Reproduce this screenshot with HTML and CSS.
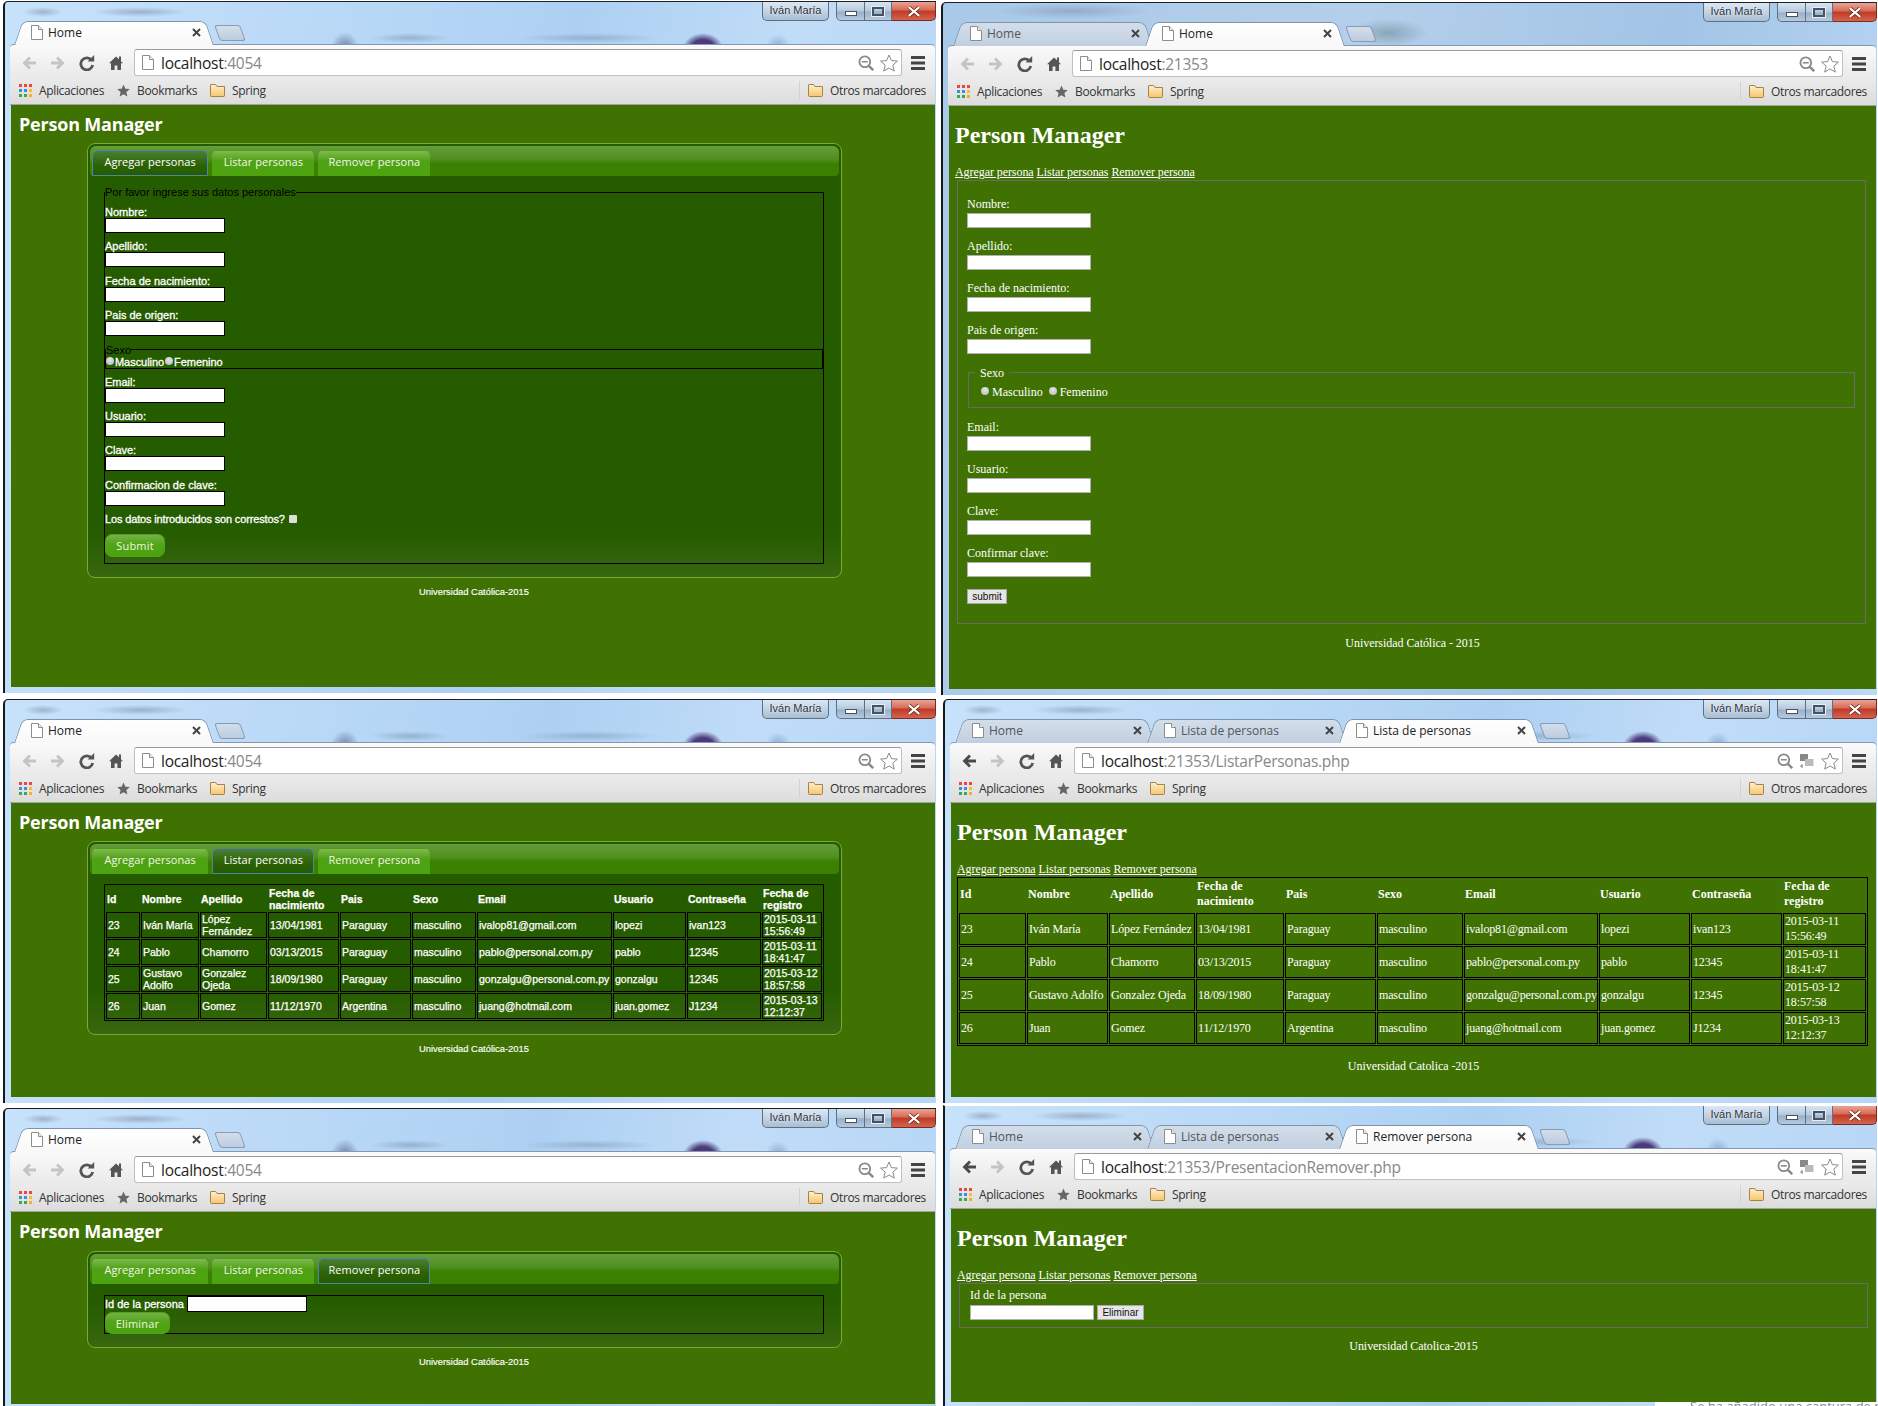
FILE: index.html
```html
<!DOCTYPE html>
<html lang="es">
<head>
<meta charset="utf-8">
<title>Person Manager</title>
<link rel="stylesheet" href="styles.css">
</head>
<body>
<svg class="defs" width="0" height="0" aria-hidden="true">
  <defs>
    <linearGradient id="fg" x1="0" y1="0" x2="0" y2="1"><stop offset="0" stop-color="#fff0cc"/><stop offset="1" stop-color="#f7c56e"/></linearGradient>
    <symbol id="back" viewBox="0 0 16 16"><path d="M15 8H4M9 2.5 3.5 8 9 13.5" fill="none" stroke="currentColor" stroke-width="2.8"/></symbol>
    <symbol id="fwd" viewBox="0 0 16 16"><path d="M1 8h11M7 2.5 12.5 8 7 13.5" fill="none" stroke="currentColor" stroke-width="2.8"/></symbol>
    <symbol id="reload" viewBox="0 0 16 16"><path d="M12.6 5.2A6 6 0 1 0 13.7 10" fill="none" stroke="#555" stroke-width="2.8"/><path d="M8.6 6.6h6.6V0z" fill="#555"/></symbol>
    <symbol id="home" viewBox="0 0 16 16"><path d="M8 1.5 1 8.2h2V15h3.6v-4.6h2.8V15H13V8.2h2l-2-2V1.5h-2v2.8z" fill="#555"/></symbol>
    <symbol id="page" viewBox="0 0 12 15"><path d="M.5.5h7l4 4v10H.5z" fill="#fff" stroke="#8d8d8d"/><path d="M7.5.5v4h4" fill="#eee" stroke="#8d8d8d"/></symbol>
    <symbol id="x" viewBox="0 0 9 9"><path d="M1 1l7 7M8 1 1 8" stroke="#444" stroke-width="2"/></symbol>
    <symbol id="zoom" viewBox="0 0 16 16"><circle cx="6.8" cy="6.8" r="5.4" fill="none" stroke="#888" stroke-width="1.8"/><path d="M3.8 6.8h6" stroke="#888" stroke-width="1.6"/><path d="M10.8 10.8l4.4 4.4" stroke="#888" stroke-width="2.4"/></symbol>
    <symbol id="staro" viewBox="0 0 18 18"><path d="M9 1l2.4 5.6 6 .5-4.6 4 1.5 6L9 14l-5.3 3.1 1.5-6-4.6-4 6-.5z" fill="#fff" stroke="#8a8a8a"/></symbol>
    <symbol id="star" viewBox="0 0 13 13"><path d="M6.5.5l1.8 4.2 4.5.4-3.4 3 1 4.4-3.9-2.3-3.9 2.3 1-4.4-3.4-3 4.5-.4z" fill="#666"/></symbol>
    <symbol id="menu" viewBox="0 0 14 14"><path d="M0 0h14v3H0zM0 5.5h14v3H0zM0 11h14v3H0z" fill="#444"/></symbol>
    <symbol id="apps" viewBox="0 0 13 13"><path d="M0 0h3v3H0z" fill="#e44"/><path d="M5 0h3v3H5z" fill="#e44"/><path d="M10 0h3v3h-3z" fill="#e44"/><path d="M0 5h3v3H0z" fill="#39c"/><path d="M5 5h3v3H5z" fill="#48e"/><path d="M10 5h3v3h-3z" fill="#fb2"/><path d="M0 10h3v3H0z" fill="#3a5"/><path d="M5 10h3v3H5z" fill="#3a5"/><path d="M10 10h3v3h-3z" fill="#fa2"/></symbol>
    <symbol id="folder" viewBox="0 0 15 14"><path d="M.5 2v10.5a1 1 0 0 0 1 1h12a1 1 0 0 0 1-1V3.5H7L5.7 1.5H1a.5.5 0 0 0-.5.5z" fill="url(#fg)" stroke="#a5824a"/></symbol>
    <symbol id="tr" viewBox="0 0 15 15"><path d="M1 1h8v7H1z" fill="#888"/><path d="M6 6h8.5v7H6z" fill="#bbb"/><path d="M1 13h3M3 11v4" stroke="#888"/></symbol>
    <symbol id="cx" viewBox="0 0 16 12"><path d="M2 1l12 10M14 1 2 11" stroke="#5a1a10" stroke-width="4"/><path d="M2 1l12 10M14 1 2 11" stroke="#fff" stroke-width="2.4"/></symbol>
  </defs>
</svg>

<!-- Ventana 1 -->
<section class="win w1">
  <div class="title">
    <div class="tab on"><svg class="fav"><use href="#page"/></svg><span class="tname">Home</span><svg class="tx"><use href="#x"/></svg></div>
    <div class="newtab"></div>
    <div class="ctls"><span class="who">Iván María</span><span class="btn min"><i></i></span><span class="btn max"><i></i></span><span class="btn cls"><svg class="cxi"><use href="#cx"/></svg></span></div>
  </div>
  <div class="nav">
    <svg class="ni off"><use href="#back"/></svg><svg class="ni off"><use href="#fwd"/></svg><svg class="ni"><use href="#reload"/></svg><svg class="ni"><use href="#home"/></svg>
    <div class="omni"><svg class="oi"><use href="#page"/></svg><span class="url">localhost<span class="dim">:4054</span></span><svg class="ri"><use href="#zoom"/></svg><svg class="rs"><use href="#staro"/></svg></div>
    <svg class="mn"><use href="#menu"/></svg>
  </div>
  <div class="bm">
    <span class="bk"><svg class="bi"><use href="#apps"/></svg>Aplicaciones</span><span class="bk"><svg class="bi"><use href="#star"/></svg>Bookmarks</span><span class="bk"><svg class="bf"><use href="#folder"/></svg>Spring</span>
    <span class="bk other"><svg class="bf"><use href="#folder"/></svg>Otros marcadores</span>
  </div>
  <main class="page">
    <h1 class="pm">Person Manager</h1>
    <div class="panel">
      <div class="bar"><a class="ptab cur">Agregar personas</a><a class="ptab">Listar personas</a><a class="ptab">Remover persona</a></div>
      <form class="mform">
        <fieldset class="mset">
          <legend class="mleg">Por favor ingrese sus datos personales</legend>
          <label class="mf">Nombre:<input class="minp" type="text"></label>
          <label class="mf">Apellido:<input class="minp" type="text"></label>
          <label class="mf">Fecha de nacimiento:<input class="minp" type="text"></label>
          <label class="mf">Pais de origen:<input class="minp" type="text"></label>
          <fieldset class="msex">
            <legend class="mleg">Sexo</legend>
            <div class="mrad"><input class="rad" type="radio" name="a"><span>Masculino</span><input class="rad" type="radio" name="a"><span>Femenino</span></div>
          </fieldset>
          <label class="mf">Email:<input class="minp" type="text"></label>
          <label class="mf">Usuario:<input class="minp" type="text"></label>
          <label class="mf">Clave:<input class="minp" type="text"></label>
          <label class="mf">Confirmacion de clave:<input class="minp" type="text"></label>
          <div class="mchk">Los datos introducidos son correstos? <input class="chk" type="checkbox"></div>
          <button class="gbtn sub" type="button">Submit</button>
        </fieldset>
      </form>
    </div>
    <p class="mfoot">Universidad Católica-2015</p>
  </main>
</section>

<!-- Ventana 2 -->
<section class="win w2">
  <div class="title">
    <div class="tab"><svg class="fav"><use href="#page"/></svg><span class="tname">Home</span><svg class="tx"><use href="#x"/></svg></div>
    <div class="tab on"><svg class="fav"><use href="#page"/></svg><span class="tname">Home</span><svg class="tx"><use href="#x"/></svg></div>
    <div class="newtab"></div>
    <div class="ctls"><span class="who">Iván María</span><span class="btn min"><i></i></span><span class="btn max"><i></i></span><span class="btn cls"><svg class="cxi"><use href="#cx"/></svg></span></div>
  </div>
  <div class="nav">
    <svg class="ni off"><use href="#back"/></svg><svg class="ni off"><use href="#fwd"/></svg><svg class="ni"><use href="#reload"/></svg><svg class="ni"><use href="#home"/></svg>
    <div class="omni"><svg class="oi"><use href="#page"/></svg><span class="url">localhost<span class="dim">:21353</span></span><svg class="ri"><use href="#zoom"/></svg><svg class="rs"><use href="#staro"/></svg></div>
    <svg class="mn"><use href="#menu"/></svg>
  </div>
  <div class="bm">
    <span class="bk"><svg class="bi"><use href="#apps"/></svg>Aplicaciones</span><span class="bk"><svg class="bi"><use href="#star"/></svg>Bookmarks</span><span class="bk"><svg class="bf"><use href="#folder"/></svg>Spring</span>
    <span class="bk other"><svg class="bf"><use href="#folder"/></svg>Otros marcadores</span>
  </div>
  <main class="page plain">
    <h1 class="ph">Person Manager</h1>
    <nav class="pnav"><a href="#">Agregar persona</a> <a href="#">Listar personas</a> <a href="#">Remover persona</a></nav>
    <form class="pset">
      <label class="pf">Nombre:<input class="pinp" type="text"></label>
      <label class="pf">Apellido:<input class="pinp" type="text"></label>
      <label class="pf">Fecha de nacimiento:<input class="pinp" type="text"></label>
      <label class="pf">Pais de origen:<input class="pinp" type="text"></label>
      <fieldset class="psex">
        <legend class="pleg">Sexo</legend>
        <div class="prad"><input class="rad" type="radio" name="b"><span>Masculino</span><input class="rad" type="radio" name="b"><span>Femenino</span></div>
      </fieldset>
      <label class="pf">Email:<input class="pinp" type="text"></label>
      <label class="pf">Usuario:<input class="pinp" type="text"></label>
      <label class="pf">Clave:<input class="pinp" type="text"></label>
      <label class="pf">Confirmar clave:<input class="pinp" type="text"></label>
      <button class="pbtn" type="button">submit</button>
    </form>
    <p class="pfoot">Universidad Católica - 2015</p>
  </main>
</section>

<!-- Ventana 3 -->
<section class="win w3">
  <div class="title">
    <div class="tab on"><svg class="fav"><use href="#page"/></svg><span class="tname">Home</span><svg class="tx"><use href="#x"/></svg></div>
    <div class="newtab"></div>
    <div class="ctls"><span class="who">Iván María</span><span class="btn min"><i></i></span><span class="btn max"><i></i></span><span class="btn cls"><svg class="cxi"><use href="#cx"/></svg></span></div>
  </div>
  <div class="nav">
    <svg class="ni off"><use href="#back"/></svg><svg class="ni off"><use href="#fwd"/></svg><svg class="ni"><use href="#reload"/></svg><svg class="ni"><use href="#home"/></svg>
    <div class="omni"><svg class="oi"><use href="#page"/></svg><span class="url">localhost<span class="dim">:4054</span></span><svg class="ri"><use href="#zoom"/></svg><svg class="rs"><use href="#staro"/></svg></div>
    <svg class="mn"><use href="#menu"/></svg>
  </div>
  <div class="bm">
    <span class="bk"><svg class="bi"><use href="#apps"/></svg>Aplicaciones</span><span class="bk"><svg class="bi"><use href="#star"/></svg>Bookmarks</span><span class="bk"><svg class="bf"><use href="#folder"/></svg>Spring</span>
    <span class="bk other"><svg class="bf"><use href="#folder"/></svg>Otros marcadores</span>
  </div>
  <main class="page">
    <h1 class="pm">Person Manager</h1>
    <div class="panel">
      <div class="bar"><a class="ptab">Agregar personas</a><a class="ptab cur">Listar personas</a><a class="ptab">Remover persona</a></div>
      <table class="mtab">
        <colgroup><col class="m1"><col class="m2"><col class="m3"><col class="m4"><col class="m5"><col class="m6"><col class="m7"><col class="m8"><col class="m9"><col class="m10"></colgroup>
        <thead><tr><th>Id</th><th>Nombre</th><th>Apellido</th><th>Fecha de nacimiento</th><th>Pais</th><th>Sexo</th><th>Email</th><th>Usuario</th><th>Contraseña</th><th>Fecha de registro</th></tr></thead>
        <tbody>
          <tr><td>23</td><td>Iván María</td><td>López Fernández</td><td>13/04/1981</td><td>Paraguay</td><td>masculino</td><td>ivalop81@gmail.com</td><td>lopezi</td><td>ivan123</td><td>2015-03-11 15:56:49</td></tr>
          <tr><td>24</td><td>Pablo</td><td>Chamorro</td><td>03/13/2015</td><td>Paraguay</td><td>masculino</td><td>pablo@personal.com.py</td><td>pablo</td><td>12345</td><td>2015-03-11 18:41:47</td></tr>
          <tr><td>25</td><td>Gustavo Adolfo</td><td>Gonzalez Ojeda</td><td>18/09/1980</td><td>Paraguay</td><td>masculino</td><td>gonzalgu@personal.com.py</td><td>gonzalgu</td><td>12345</td><td>2015-03-12 18:57:58</td></tr>
          <tr><td>26</td><td>Juan</td><td>Gomez</td><td>11/12/1970</td><td>Argentina</td><td>masculino</td><td>juang@hotmail.com</td><td>juan.gomez</td><td>J1234</td><td>2015-03-13 12:12:37</td></tr>
        </tbody>
      </table>
    </div>
    <p class="mfoot">Universidad Católica-2015</p>
  </main>
</section>

<!-- Ventana 4 -->
<section class="win w4">
  <div class="title">
    <div class="tab"><svg class="fav"><use href="#page"/></svg><span class="tname">Home</span><svg class="tx"><use href="#x"/></svg></div>
    <div class="tab"><svg class="fav"><use href="#page"/></svg><span class="tname">Lista de personas</span><svg class="tx"><use href="#x"/></svg></div>
    <div class="tab on"><svg class="fav"><use href="#page"/></svg><span class="tname">Lista de personas</span><svg class="tx"><use href="#x"/></svg></div>
    <div class="newtab"></div>
    <div class="ctls"><span class="who">Iván María</span><span class="btn min"><i></i></span><span class="btn max"><i></i></span><span class="btn cls"><svg class="cxi"><use href="#cx"/></svg></span></div>
  </div>
  <div class="nav">
    <svg class="ni live"><use href="#back"/></svg><svg class="ni off"><use href="#fwd"/></svg><svg class="ni"><use href="#reload"/></svg><svg class="ni"><use href="#home"/></svg>
    <div class="omni"><svg class="oi"><use href="#page"/></svg><span class="url">localhost<span class="dim">:21353/ListarPersonas.php</span></span><svg class="ri"><use href="#zoom"/></svg><svg class="rt"><use href="#tr"/></svg><svg class="rs"><use href="#staro"/></svg></div>
    <svg class="mn"><use href="#menu"/></svg>
  </div>
  <div class="bm">
    <span class="bk"><svg class="bi"><use href="#apps"/></svg>Aplicaciones</span><span class="bk"><svg class="bi"><use href="#star"/></svg>Bookmarks</span><span class="bk"><svg class="bf"><use href="#folder"/></svg>Spring</span>
    <span class="bk other"><svg class="bf"><use href="#folder"/></svg>Otros marcadores</span>
  </div>
  <main class="page plain">
    <h1 class="ph">Person Manager</h1>
    <nav class="pnav"><a href="#">Agregar persona</a> <a href="#">Listar personas</a> <a href="#">Remover persona</a></nav>
    <table class="ptable">
      <colgroup><col class="p1"><col class="p2"><col class="p3"><col class="p4"><col class="p5"><col class="p6"><col class="p7"><col class="p8"><col class="p9"><col class="p10"></colgroup>
      <thead><tr><th>Id</th><th>Nombre</th><th>Apellido</th><th>Fecha de nacimiento</th><th>Pais</th><th>Sexo</th><th>Email</th><th>Usuario</th><th>Contraseña</th><th>Fecha de registro</th></tr></thead>
      <tbody>
        <tr><td>23</td><td>Iván María</td><td>López Fernández</td><td>13/04/1981</td><td>Paraguay</td><td>masculino</td><td>ivalop81@gmail.com</td><td>lopezi</td><td>ivan123</td><td>2015-03-11 15:56:49</td></tr>
        <tr><td>24</td><td>Pablo</td><td>Chamorro</td><td>03/13/2015</td><td>Paraguay</td><td>masculino</td><td>pablo@personal.com.py</td><td>pablo</td><td>12345</td><td>2015-03-11 18:41:47</td></tr>
        <tr><td>25</td><td>Gustavo Adolfo</td><td>Gonzalez Ojeda</td><td>18/09/1980</td><td>Paraguay</td><td>masculino</td><td>gonzalgu@personal.com.py</td><td>gonzalgu</td><td>12345</td><td>2015-03-12 18:57:58</td></tr>
        <tr><td>26</td><td>Juan</td><td>Gomez</td><td>11/12/1970</td><td>Argentina</td><td>masculino</td><td>juang@hotmail.com</td><td>juan.gomez</td><td>J1234</td><td>2015-03-13 12:12:37</td></tr>
      </tbody>
    </table>
    <p class="pfoot tf">Universidad Catolica -2015</p>
  </main>
</section>

<!-- Ventana 5 -->
<section class="win w5">
  <div class="title">
    <div class="tab on"><svg class="fav"><use href="#page"/></svg><span class="tname">Home</span><svg class="tx"><use href="#x"/></svg></div>
    <div class="newtab"></div>
    <div class="ctls"><span class="who">Iván María</span><span class="btn min"><i></i></span><span class="btn max"><i></i></span><span class="btn cls"><svg class="cxi"><use href="#cx"/></svg></span></div>
  </div>
  <div class="nav">
    <svg class="ni off"><use href="#back"/></svg><svg class="ni off"><use href="#fwd"/></svg><svg class="ni"><use href="#reload"/></svg><svg class="ni"><use href="#home"/></svg>
    <div class="omni"><svg class="oi"><use href="#page"/></svg><span class="url">localhost<span class="dim">:4054</span></span><svg class="ri"><use href="#zoom"/></svg><svg class="rs"><use href="#staro"/></svg></div>
    <svg class="mn"><use href="#menu"/></svg>
  </div>
  <div class="bm">
    <span class="bk"><svg class="bi"><use href="#apps"/></svg>Aplicaciones</span><span class="bk"><svg class="bi"><use href="#star"/></svg>Bookmarks</span><span class="bk"><svg class="bf"><use href="#folder"/></svg>Spring</span>
    <span class="bk other"><svg class="bf"><use href="#folder"/></svg>Otros marcadores</span>
  </div>
  <main class="page">
    <h1 class="pm">Person Manager</h1>
    <div class="panel">
      <div class="bar"><a class="ptab">Agregar personas</a><a class="ptab">Listar personas</a><a class="ptab cur">Remover persona</a></div>
      <form class="mdel">
        <label class="mdl">Id de la persona<input class="minp il" type="text"></label>
        <button class="gbtn del" type="button">Eliminar</button>
      </form>
    </div>
    <p class="mfoot">Universidad Católica-2015</p>
  </main>
</section>

<!-- Ventana 6 -->
<section class="win w6">
  <div class="title">
    <div class="tab"><svg class="fav"><use href="#page"/></svg><span class="tname">Home</span><svg class="tx"><use href="#x"/></svg></div>
    <div class="tab"><svg class="fav"><use href="#page"/></svg><span class="tname">Lista de personas</span><svg class="tx"><use href="#x"/></svg></div>
    <div class="tab on"><svg class="fav"><use href="#page"/></svg><span class="tname">Remover persona</span><svg class="tx"><use href="#x"/></svg></div>
    <div class="newtab"></div>
    <div class="ctls"><span class="who">Iván María</span><span class="btn min"><i></i></span><span class="btn max"><i></i></span><span class="btn cls"><svg class="cxi"><use href="#cx"/></svg></span></div>
  </div>
  <div class="nav">
    <svg class="ni live"><use href="#back"/></svg><svg class="ni off"><use href="#fwd"/></svg><svg class="ni"><use href="#reload"/></svg><svg class="ni"><use href="#home"/></svg>
    <div class="omni"><svg class="oi"><use href="#page"/></svg><span class="url">localhost<span class="dim">:21353/PresentacionRemover.php</span></span><svg class="ri"><use href="#zoom"/></svg><svg class="rt"><use href="#tr"/></svg><svg class="rs"><use href="#staro"/></svg></div>
    <svg class="mn"><use href="#menu"/></svg>
  </div>
  <div class="bm">
    <span class="bk"><svg class="bi"><use href="#apps"/></svg>Aplicaciones</span><span class="bk"><svg class="bi"><use href="#star"/></svg>Bookmarks</span><span class="bk"><svg class="bf"><use href="#folder"/></svg>Spring</span>
    <span class="bk other"><svg class="bf"><use href="#folder"/></svg>Otros marcadores</span>
  </div>
  <main class="page plain">
    <h1 class="ph">Person Manager</h1>
    <nav class="pnav"><a href="#">Agregar persona</a> <a href="#">Listar personas</a> <a href="#">Remover persona</a></nav>
    <form class="pset pdel">
      <label class="pdl">Id de la persona</label>
      <div class="pdr"><input class="pinp" type="text"><button class="pbtn el" type="button">Eliminar</button></div>
    </form>
    <p class="pfoot">Universidad Catolica-2015</p>
  </main>
</section>

<div class="toast">Se ha añadido una captura de pantalla</div>
</body>
</html>
```

FILE: styles.css
```css
* { box-sizing: border-box; }
html, body { margin: 0; padding: 0; }
body {
  position: relative;
  width: 1878px;
  height: 1406px;
  overflow: hidden;
  background: #fff;
  font-family: "Open Sans", sans-serif;
}
.defs { position: absolute; }

/* Ventanas sobre el escritorio */
.win {
  position: absolute;
  display: flex;
  flex-direction: column;
  padding: 0 1px 0 5px;
  border-left: 2px solid #14181f;
  border-top: 1px solid #1c2026;
  border-top-left-radius: 5px;
  overflow: hidden;
  background:
    radial-gradient(ellipse 20px 5px at 38px 10px, rgba(70,85,110,.32), transparent),
    radial-gradient(ellipse 48px 5px at 135px 10px, rgba(70,85,110,.32), transparent),
    radial-gradient(ellipse 14px 16px at 340px 46px, rgba(60,70,110,.6), transparent),
    radial-gradient(ellipse 40px 5px at 405px 36px, rgba(70,85,110,.28), transparent),
    radial-gradient(ellipse 70px 5px at 585px 36px, rgba(70,85,110,.25), transparent),
    radial-gradient(ellipse 20px 15px at 698px 46px, #4b3a7c 0, #4b3a7c 55%, transparent 100%),
    radial-gradient(ellipse 12px 12px at 773px 44px, rgba(70,110,170,.4), transparent),
    linear-gradient(100deg, #c7e2fb 0%, #bad9f7 30%, #add0f2 55%, #c0dcf8 75%, #b6d6f6 100%);
}
.w1 { left: 3px; top: 1px; width: 933px; height: 692px; }
.w2 {
  left: 941px; top: 2px; width: 936px; height: 693px;
  background:
    radial-gradient(ellipse 80px 8px at 130px 8px, rgba(70,85,110,.25), transparent),
    radial-gradient(ellipse 40px 14px at 445px 30px, rgba(60,90,90,.35), transparent),
    linear-gradient(100deg, #a9c9e8 0%, #b4cfeb 40%, #a3c4e6 70%, #bcd9f6 100%);
}
.w3 { left: 3px; top: 699px; width: 933px; height: 404px; }
.w4 { left: 943px; top: 699px; width: 934px; height: 404px; }
.w5 { left: 3px; top: 1108px; width: 933px; height: 298px; }
.w6 { left: 943px; top: 1105px; width: 934px; height: 301px; }
.w6 { border-top-color: #fff; border-top-left-radius: 0; }

.title {
  position: relative;
  z-index: 2;
  height: 42px;
  flex: none;
  display: flex;
  align-items: flex-end;
  padding-left: 4px;
}
.w2 .title, .w4 .title, .w6 .title { padding-left: 5px; }

/* Pestañas del navegador */
.tab {
  position: relative;
  z-index: 1;
  flex: none;
  display: flex;
  align-items: center;
  width: 200px;
  height: 24px;
  margin-right: -8px;
  margin-bottom: -1px;
  padding: 0 13px 1px 17px;
  font-size: 12px;
  color: #555;
}
.tab::before, .tab::after {
  content: "";
  position: absolute;
  z-index: -1;
  top: 0;
  bottom: 0;
  width: 50%;
  background: linear-gradient(#d3deea, #c0cfe0);
  border: 1px solid #8093a8;
  border-bottom: 0;
}
.tab::before {
  left: 0;
  border-right: 0;
  border-top-left-radius: 6px;
  transform: skewX(-19deg);
  transform-origin: bottom left;
}
.tab::after {
  right: 0;
  border-left: 0;
  border-top-right-radius: 6px;
  transform: skewX(19deg);
  transform-origin: bottom right;
}
.tab.on { z-index: 2; color: #222; }
.tab.on::before, .tab.on::after { background: linear-gradient(#fff, #f8f8f8); }
.fav { width: 12px; height: 15px; flex: none; }
.tname { flex: 1; margin-left: 5px; white-space: nowrap; }
.tx { width: 9px; height: 9px; flex: none; }
.newtab {
  flex: none;
  width: 26px;
  height: 16px;
  margin: 0 0 3px 11px;
  background: linear-gradient(#d3deea, #bccce0);
  border: 1px solid #8a9bb0;
  border-radius: 3px;
  transform: skewX(20deg);
}

/* Controles de ventana */
.ctls {
  position: absolute;
  top: 0;
  right: -1px;
  display: flex;
  height: 19px;
}
.who {
  width: 67px;
  margin-right: 7px;
  border: 1px solid #5f6f80;
  border-top: 0;
  border-radius: 0 0 5px 5px;
  background: linear-gradient(#dbe8f4, #a9bed4);
  font: 11px/17px "Liberation Sans", sans-serif;
  text-align: center;
  color: #2c3138;
  text-shadow: 0 0 2px #fff;
}
.btn {
  display: flex;
  align-items: center;
  justify-content: center;
  height: 19px;
  border: 1px solid #5f6f80;
  border-top: 0;
  border-left-width: 0;
  background: linear-gradient(#d6e5f3 0, #b5c9dd 50%, #98b0c8 55%, #b6cadf 100%);
}
.min { width: 29px; border-left-width: 1px; border-radius: 0 0 0 5px; }
.min i { display: block; width: 12px; height: 5px; margin-top: 5px; background: #fff; border: 1px solid #46525f; }
.max { width: 27px; }
.max i { display: block; width: 12px; height: 9px; border: 2px solid #46525f; outline: 1px solid #e8eef4; background: transparent; }
.cls {
  width: 44px;
  border-radius: 0 0 5px 0;
  border-color: #7a2a20;
  background: linear-gradient(#eba395 0, #d66a55 45%, #bf3a26 50%, #d5634d 100%);
}
.cxi { width: 14px; height: 11px; }

/* Barra de navegación */
.nav {
  position: relative;
  flex: none;
  height: 34px;
  display: flex;
  align-items: center;
  padding: 2px 0 0 4px;
  background: linear-gradient(#fafafa, #e9e9e9);
  border-top: 1px solid #8598ad;
  border-top-left-radius: 4px;
  border-top-right-radius: 4px;
}
.ni { width: 16px; height: 16px; flex: none; margin: 0 6.5px; color: #c2c2c2; }
.ni.off { color: #c4c4c4; }
.ni.live { color: #4a4a4a; }
.omni {
  flex: 1;
  display: flex;
  align-items: center;
  height: 27px;
  margin-left: 4px;
  background: #fff;
  border: 1px solid #c0c0c0;
  border-top-color: #9a9a9a;
  border-radius: 3px;
}
.oi { width: 12px; height: 15px; flex: none; margin: 0 7px; }
.url { flex: 1; font-size: 15.5px; color: #222; white-space: nowrap; letter-spacing: -.28px; }
.dim { color: #888; }
.ri { width: 16px; height: 16px; flex: none; margin-right: 6px; }
.rt { width: 15px; height: 15px; flex: none; margin-right: 7px; }
.rs { width: 18px; height: 18px; flex: none; margin-right: 3px; }
.mn { width: 14px; height: 14px; flex: none; margin: 0 10px 0 9px; }

/* Barra de marcadores */
.bm {
  flex: none;
  height: 27px;
  display: flex;
  align-items: center;
  padding: 0 9px 2px;
  background: linear-gradient(#ebebeb, #dcdcdc);
  border-bottom: 1px solid #a3a3a3;
  font-size: 12px;
  color: #333;
  white-space: nowrap;
}
.bk { display: flex; align-items: center; gap: 7px; margin-right: 13px; letter-spacing: -.35px; }
.bi { width: 13px; height: 13px; flex: none; }
.bf { width: 15px; height: 14px; flex: none; }
.bk.other { margin: 0 0 0 auto; padding-left: 8px; border-left: 1px solid #d2d2d2; height: 18px; }

/* Página */
.page {
  flex: 1;
  min-height: 0;
  margin: 0 0 6px 1px;
  background: #3f7203;
  color: #fff;
}
.w5 .page { margin-bottom: 2px; }
.w6 .page { margin-bottom: 4px; }

/* Versión con plantilla verde */
.pm {
  margin: 0 0 0 8px;
  height: 38px;
  font: 700 18px/38px "Open Sans", sans-serif;
  letter-spacing: -.2px;
  color: #fff;
}
.w5 .pm { height: 39px; }
.panel {
  width: 755px;
  margin-left: 76px;
  padding: 2px 0 13px;
  border: 1px solid #73ad31;
  border-radius: 8px;
  background: linear-gradient(#265c00 calc(100% - 45px), #38670f);
  font-family: "Liberation Sans", Arial, sans-serif;
}
.bar {
  display: flex;
  align-items: flex-end;
  gap: 4px;
  height: 30px;
  margin: 0 2px;
  padding-left: 2px;
  border-radius: 6px 6px 4px 4px;
  background: linear-gradient(#659d3a 0, #4f8e1e 45%, #3b8000 60%, #3b8000 100%);
}
.ptab {
  height: 26px;
  padding: 0 10.5px;
  border: 1px solid transparent;
  border-bottom: 0;
  border-radius: 6px 6px 0 0;
  background: linear-gradient(#80b852 0, #50a215 40%, #4ca40e 100%);
  font: 11px/22px "Open Sans", sans-serif;
  letter-spacing: .05px;
  color: #f2f8ea;
  white-space: nowrap;
}
.ptab:first-child { padding: 0 11.5px; }
.ptab:last-child { padding: 0 9px; }
.ptab.cur {
  border: 1px solid #4b87a9;
  background: linear-gradient(#4b7f33 0, #2c6205 60%, #265c00 100%);
  color: #fff;
}
.mform { margin: 10px 17px 0 16px; }
.mset { margin: 0; padding: 0 0 6px; border: 1px solid #000; }
.mleg { padding: 0; font-size: 11px; line-height: 12px; color: #000; }
.mf {
  display: block;
  margin-bottom: 7.4px;
  font-size: 11px;
  line-height: 12px;
  color: #fff;
  -webkit-text-stroke: .3px #fff;
}
.mset > .mf:first-of-type { margin-top: 8px; }
.minp {
  display: block;
  width: 120px;
  height: 15px;
  padding: 0;
  border: 1px solid #000;
  border-radius: 0;
  background: #fff;
  outline: 0;
}
.msex { margin: 0 0 6.5px; padding: 0; border: 1px solid #000; }
.mrad, .prad { display: flex; align-items: center; }
.mrad { height: 12px; margin-top: .5px; font-size: 11px; color: #fff; -webkit-text-stroke: .3px #fff; letter-spacing: -.05px; }
.rad {
  appearance: none;
  width: 8px;
  height: 8px;
  margin: 0 1px 2px 0;
  border-radius: 50%;
  background: radial-gradient(circle at 50% 35%, #e6e6e6, #b4b4b4);
  flex: none;
}
.mrad span { margin-right: 1px; }
.mchk { height: 12px; font-size: 11px; line-height: 12px; letter-spacing: -.15px; color: #fff; -webkit-text-stroke: .3px #fff; white-space: nowrap; }
.chk {
  appearance: none;
  display: inline-block;
  width: 8px;
  height: 8px;
  margin: 0 0 2px 1px;
  vertical-align: middle;
  background: #ddd;
  border-radius: 1px;
}
.gbtn {
  display: block;
  padding: 0;
  border: 1px solid #56a01f;
  border-radius: 7px;
  background: linear-gradient(#74b14a 0, #53a416 45%, #4ba20d 100%);
  font: 11px "Open Sans", sans-serif;
  letter-spacing: .2px;
  color: #eef6e2;
}
.sub { width: 60px; height: 23px; margin-top: 8.4px; }
.mfoot {
  margin: 8px 0 0;
  font: 9.4px/12px "Liberation Sans", Arial, sans-serif;
  text-align: center;
  padding-left: 2px;
  color: #fff;
  -webkit-text-stroke: .15px #fff;
}

.mtab {
  table-layout: fixed;
  width: 719px;
  margin: 10px 0 0 16px;
  border: 1px solid #000;
  border-spacing: 1px;
  font-size: 10.5px;
  line-height: 12px;
  color: #fff;
  -webkit-text-stroke: .25px #fff;
}
.m1 { width: 34px; } .m2 { width: 58px; } .m3 { width: 67px; } .m4 { width: 71px; } .m5 { width: 71px; }
.m6 { width: 64px; } .m7 { width: 135px; } .m8 { width: 73px; } .m9 { width: 74px; } .m10 { width: 60px; }
.mtab th { height: 25px; padding: 0 0 0 1px; text-align: left; font-weight: 700; }
.mtab td { height: 26px; padding: 0 0 0 1px; border: 1px solid #000; }

.mdel { height: 39px; margin: 11px 17px 0 16px; border: 1px solid #000; }
.mdl {
  display: flex;
  align-items: center;
  height: 16px;
  font-size: 11px;
  color: #fff;
  -webkit-text-stroke: .3px #fff;
}
.il { height: 16px; margin-left: 3px; }
.del { width: 65px; height: 22px; }

/* Versión sin plantilla */
.plain { padding: 15px 6px 0; font-family: "Liberation Serif", "Times New Roman", serif; font-size: 12px; }
.ph { margin: 0; font: 700 24px/28px "Liberation Serif", serif; color: #fff; }
.pnav { margin-top: 16px; line-height: 14px; white-space: nowrap; letter-spacing: -.07px; }
.pnav a { color: #fff; }
.pset { margin: 1px 4px 0 2px; padding: 16.5px 9px 19.5px; border: 1px solid #6a6a66; }
.pf { display: block; margin-bottom: 11.5px; line-height: 13px; }
.pinp {
  display: block;
  width: 124px;
  height: 15px;
  margin-top: 2.5px;
  padding: 0;
  border: 1px solid #b0b0b0;
  border-radius: 0;
  background: #fff;
}
.psex { margin: 0 1px 13px; padding: 6px 6px 8px; border: 1px solid #6a6a66; min-width: 0; }
.pleg { padding: 0 5px; line-height: 14px; }
.prad { height: 13px; padding-left: 6px; }
.prad .rad { margin: 0 3px 2px 0; }
.prad span { margin-right: 6px; }
.pbtn {
  display: block;
  width: 40px;
  height: 15px;
  padding: 0;
  background: #e6e6e6;
  border: 1px solid #a8a8a8;
  font: 10px/13px "Liberation Sans", Arial, sans-serif;
  color: #111;
}
.pfoot { margin: 12px 0 0; line-height: 14px; text-align: center; color: #fff; letter-spacing: -.05px; }
.pfoot.tf { margin-top: 13px; }
.w6 .pfoot { margin-top: 11px; }
.pdel { padding: 5px 10px 7px; margin-right: 2px; }
.pdl { display: block; line-height: 13px; }
.pdr { display: flex; gap: 3px; margin-top: 3px; }
.pdr .pinp { margin-top: 0; }
.el { width: 47px; margin: 0; }

.ptable {
  table-layout: fixed;
  width: 911px;
  margin: 1px 0 0;
  border: 1px solid #000;
  border-spacing: 1px;
  line-height: 15px;
}
.p1 { width: 67px; } .p2 { width: 81px; } .p3 { width: 86px; } .p4 { width: 88px; } .p5 { width: 91px; }
.p6 { width: 86px; } .p7 { width: 134px; } .p8 { width: 91px; } .p9 { width: 91px; } .p10 { width: 83px; }
.ptable th { height: 31px; padding: 0 0 3px 1px; text-align: left; font-weight: 700; }
.ptable td { height: 32px; padding: 0 0 0 1px; border: 1px solid #000; letter-spacing: -.15px; }

.toast {
  position: absolute;
  left: 1655px;
  top: 1402px;
  width: 223px;
  height: 4px;
  overflow: hidden;
  padding-left: 35px;
  font: 13px/9px "Open Sans", sans-serif;
  color: #888;
  white-space: nowrap;
  background: #fff;
}
```
